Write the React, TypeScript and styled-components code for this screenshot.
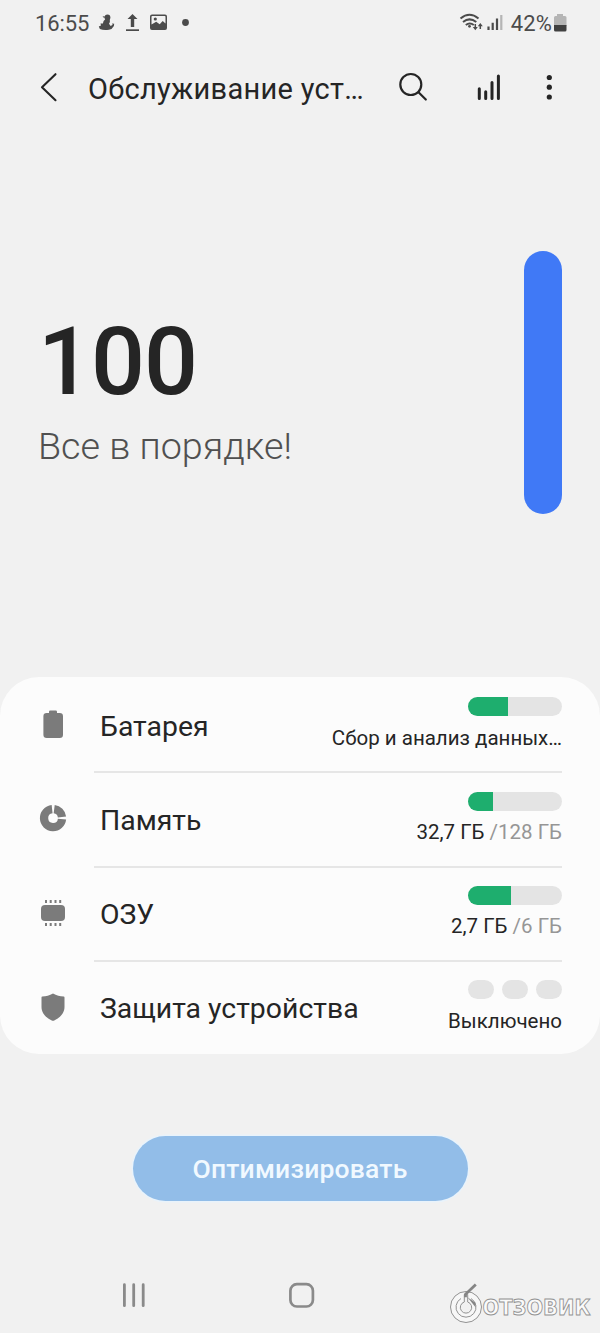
import React from "react";
import styled, { createGlobalStyle } from "styled-components";

const Global = createGlobalStyle`
  * { box-sizing: border-box; }
  body { margin: 0; background: #f1f1f1; font-family: Roboto, sans-serif; color: #252525; }
`;

const Screen = styled.main`
  width: 600px;
  height: 1333px;
  background: #f1f1f1;
  display: flex;
  flex-direction: column;
  overflow: hidden;
  svg { display: block; flex: none; }
`;

const StatusBar = styled.header`
  height: 46px;
  padding: 0 33px 0 35px;
  display: flex;
  justify-content: space-between;
  align-items: center;
  color: #4b4b4b;
`;

const StatusGroup = styled.div`
  display: flex;
  align-items: center;
`;

const StatusText = styled.span<{ $spacing: number }>`
  padding-top: 2px;
  font-size: 22px;
  line-height: 26px;
  letter-spacing: ${(p) => p.$spacing}px;
`;

const AppBar = styled.nav`
  height: 84px;
  padding: 0 38px 0 36px;
  display: flex;
  align-items: center;
`;

const Title = styled.h1`
  margin: 1px 0 0 22px;
  width: 304px;
  font-size: 29px;
  line-height: 36px;
  font-weight: 400;
  letter-spacing: 0.28px;
  white-space: nowrap;
`;

const IconButton = styled.button<{ $width: number }>`
  width: ${(p) => p.$width}px;
  height: 36px;
  padding: 0;
  border: 0;
  background: none;
  color: #252525;
  display: flex;
  align-items: center;
`;

const Summary = styled.section`
  height: 547px;
  padding: 121px 38px 0;
  display: flex;
  justify-content: space-between;
`;

const Score = styled.div`
  padding-top: 54px;
`;

const ScoreValue = styled.div`
  font-size: 95px;
  line-height: 114px;
  font-weight: 500;
  letter-spacing: -1px;
`;

const ScoreText = styled.div`
  margin-top: 4px;
  font-size: 37.7px;
  line-height: 46px;
  font-weight: 300;
  color: #505050;
`;

const ScoreBar = styled.div`
  width: 38px;
  height: 263px;
  border-radius: 19px;
  background: #4079f6;
`;

const Card = styled.section`
  height: 377px;
  border-radius: 39px;
  background: #fcfcfc;
  padding: 0 38px;
  display: flex;
  flex-direction: column;
`;

const Row = styled.div`
  flex: 1;
  display: flex;
`;

const RowIcon = styled.div`
  width: 56px;
  padding-top: 31px;
`;

const RowBody = styled.div<{ $last?: boolean }>`
  flex: 1;
  margin-bottom: ${(p) => (p.$last ? "0" : "-2px")};
  padding: 0 0 0 6px;
  display: flex;
  justify-content: space-between;
  border-bottom: ${(p) => (p.$last ? "0" : "2px solid #e6e6e6")};
`;

const Label = styled.div`
  padding-top: 31.5px;
  font-size: 28.4px;
  line-height: 36px;
  white-space: nowrap;
`;

const Status = styled.div`
  padding-top: 20.3px;
  display: flex;
  flex-direction: column;
  align-items: flex-end;
`;

const Meter = styled.div`
  width: 94px;
  height: 19px;
  border-radius: 10px;
  background: #e4e4e4;
  overflow: hidden;
`;

const MeterFill = styled.div<{ $width: number }>`
  width: ${(p) => p.$width}px;
  height: 100%;
  background: #1eae6e;
`;

const Pills = styled.div`
  width: 94px;
  display: flex;
  justify-content: space-between;
`;

const Pill = styled.div`
  width: 26px;
  height: 19px;
  border-radius: 10px;
  background: #e4e4e4;
`;

const Detail = styled.div`
  margin-top: 8.7px;
  font-size: 20.5px;
  line-height: 26px;
  white-space: nowrap;
`;

const Muted = styled.span`
  color: #969696;
`;

const Actions = styled.div`
  padding-top: 82px;
  height: 204px;
  display: flex;
  justify-content: center;
  align-items: flex-start;
`;

const Primary = styled.button`
  width: 335px;
  height: 65px;
  border: 0;
  border-radius: 33px;
  background: #92bde8;
  color: #f1f9ff;
  font: 500 26.5px/32px Roboto, sans-serif;
  letter-spacing: 0.2px;
  padding: 0;
  box-shadow: 0 0 0 1.5px #e9f3fb;
`;

const NavBar = styled.footer`
  position: relative;
  height: 75px;
  padding: 24px 0 0 122px;
  display: flex;
  gap: 143px;
`;

const Watermark = styled.div`
  position: absolute;
  left: 445px;
  top: 20px;
`;

const BatteryIcon = () => (
  <svg width="30" height="32" viewBox="0 0 30 32" fill="#7b7b7b">
    <path d="M11 5V3.8q0-1.300 1.300-1.300h5.400q1.300 0 1.300 1.300V5h2.700q3.300 0 3.300 3.300v18.400q0 3.300-3.300 3.300H8.700q-3.300 0-3.300-3.300V8.300Q5.400 5 8.700 5z" />
  </svg>
);

const StorageIcon = () => (
  <svg width="30" height="32" viewBox="0 0 30 32" fill="none" stroke="#7b7b7b" strokeWidth="8.300">
    <path d="M14.100 7.200A9 9 0 1 0 24 17.100" />
    <path d="M16.200 7.200A9 9 0 0 1 24 15" />
  </svg>
);

const MemoryIcon = () => (
  <svg width="30" height="32" viewBox="0 0 30 32" fill="#7b7b7b">
    <rect x="3" y="8" width="24" height="16" rx="4" />
    <path d="M8 3v3M12.700 3v3M17.500 3v3M22.200 3v3M8 26v3M12.700 26v3M17.500 26v3M22.200 26v3" stroke="#7b7b7b" strokeWidth="2" strokeLinecap="butt" />
  </svg>
);

const ShieldIcon = () => (
  <svg width="30" height="32" viewBox="0 0 30 32" fill="#7b7b7b">
    <path d="M15 2.500C18.500 4.600 22 5.200 25.700 5.500q.8.100.8.900V16c0 6.500-4.800 11-10.300 13.500q-1.200.6-2.400 0C8.300 27 3.500 22.500 3.500 16V6.400q0-.8.800-.9C8 5.200 11.500 4.600 15 2.500z" />
  </svg>
);

const rows = [
  { label: "Батарея", icon: <BatteryIcon />, fill: 40, value: "Сбор и анализ данных…" },
  { label: "Память", icon: <StorageIcon />, fill: 25, value: "32,7 ГБ ", total: "/128 ГБ" },
  { label: "ОЗУ", icon: <MemoryIcon />, fill: 43, value: "2,7 ГБ ", total: "/6 ГБ" },
  { label: "Защита устройства", icon: <ShieldIcon />, value: "Выключено" },
];

export default function App() {
  return (
    <Screen>
      <Global />
      <StatusBar>
        <StatusGroup>
          <StatusText $spacing={-0.1}>16:55</StatusText>
          <svg width="106" height="24" viewBox="89 11 106 24" fill="#4b4b4b">
            <circle cx="107.500" cy="17.500" r="2.900" />
            <path d="M104.500 16l-2 .8 2.300 1.500zM105.500 19l4.300.2q.6 2.800-.8 4.600l1.700 2.200 2-1.300-.8-1.300 2.300.4-.3 2.300q-1.500 3.200-5 3.700-5.500.8-9-.7l-1.100-2.600 2.200-.9-.5-2 2.400-.2q0-2.500 2.600-4.400z" />
            <path d="M132.500 14l5 5h-3.300v8h-3.400v-8h-3.300z" />
            <path d="M126 29.300h13v1.700h-13z" />
            <path fillRule="evenodd" d="M152 14.500h13q2 0 2 2v11.500q0 2-2 2h-13q-2 0-2-2V16.500q0-2 2-2zm.2 1.600q-.7 0-.7.700v7.700l4.700-2.700 3.500 2.500 3-3.300 2.800 2.500V16.800q0-.7-.7-.7z" />
            <circle cx="155.300" cy="19" r="1.600" />
            <circle cx="185.500" cy="22.500" r="3.400" />
          </svg>
        </StatusGroup>
        <StatusGroup>
          <svg width="52" height="24" viewBox="459 11 52 24" fill="none" stroke="#4b4b4b">
            <path d="M460.500 18.500q9-7.500 18 0M463 22q6.500-5.300 13.300 0M465.800 25q4-3 8 0" strokeWidth="2" />
            <circle cx="469.500" cy="26.300" r="1.400" fill="#4b4b4b" stroke="none" />
            <path d="M475.300 24v4M480.300 29v-4" strokeWidth="1.500" />
            <path d="M472.800 27h5l-2.500 3.200zM477.800 26.200h5l-2.500-3.200z" fill="#4b4b4b" stroke="none" />
            <path d="M488.500 26.500V30M492.700 22.700V30M497 18.500V30" strokeWidth="2.200" />
            <path d="M501.300 15V30" strokeWidth="2.200" stroke="#b5b5b5" />
          </svg>
          <StatusText $spacing={0.1}>42%</StatusText>
          <svg width="15" height="20" viewBox="552 12 15 20">
            <path d="M557 13h6v2h2q1.500 0 1.500 1.500V25H554v-8.500q0-1.500 1.500-1.500h1.500z" fill="#b5b5b5" />
            <path d="M554 24h12.500v5q0 1.500-1.500 1.500h-9.500q-1.500 0-1.500-1.500z" fill="#404040" />
          </svg>
        </StatusGroup>
      </StatusBar>

      <AppBar>
        <IconButton $width={30} aria-label="Назад">
          <svg width="30" height="32" viewBox="36 72 30 32" fill="none" stroke="#252525" strokeWidth="2.100" strokeLinecap="round" strokeLinejoin="round">
            <path d="M55.500 74.200L42 87.200l13.500 13" />
          </svg>
        </IconButton>
        <Title>Обслуживание уст…</Title>
        <IconButton $width={78} aria-label="Поиск">
          <svg width="36" height="32" viewBox="392 72 36 32" fill="none" stroke="#252525" strokeWidth="2.200" strokeLinecap="round">
            <circle cx="410.800" cy="84.500" r="10.500" />
            <path d="M418.500 92.300l7.300 7.200" />
          </svg>
        </IconButton>
        <IconButton $width={68} aria-label="Статистика">
          <svg width="36" height="32" viewBox="470 72 36 32" fill="none" stroke="#252525" strokeWidth="3" strokeLinecap="round">
            <path d="M479.300 88.700v9.700M485.700 91.800v6.600M492 82.500v15.900M498.400 76v22.400" />
          </svg>
        </IconButton>
        <IconButton $width={24} aria-label="Ещё">
          <svg width="24" height="32" viewBox="538 72 24 32" fill="#252525">
            <circle cx="549.300" cy="77.500" r="2.600" />
            <circle cx="549.300" cy="87.200" r="2.600" />
            <circle cx="549.300" cy="97" r="2.600" />
          </svg>
        </IconButton>
      </AppBar>

      <Summary>
        <Score>
          <ScoreValue>100</ScoreValue>
          <ScoreText>Все в порядке!</ScoreText>
        </Score>
        <ScoreBar />
      </Summary>

      <Card>
        {rows.map((r, i) => (
          <Row key={r.label}>
            <RowIcon>{r.icon}</RowIcon>
            <RowBody $last={i === rows.length - 1}>
              <Label>{r.label}</Label>
              <Status>
                {r.fill ? (
                  <Meter><MeterFill $width={r.fill} /></Meter>
                ) : (
                  <Pills><Pill /><Pill /><Pill /></Pills>
                )}
                <Detail>{r.value}{r.total && <Muted>{r.total}</Muted>}</Detail>
              </Status>
            </RowBody>
          </Row>
        ))}
      </Card>

      <Actions>
        <Primary>Оптимизировать</Primary>
      </Actions>

      <NavBar>
        <svg width="24" height="26" viewBox="122 1282 24 26" stroke="#8a8a8a" strokeWidth="2.800" strokeLinecap="round">
          <path d="M124.400 1284.700v21M133.700 1284.700v21M143.200 1284.700v21" />
        </svg>
        <svg width="26" height="26" viewBox="289 1282 26 26" fill="none" stroke="#8a8a8a" strokeWidth="2.700">
          <rect x="290.400" y="1284.200" width="22.500" height="22.300" rx="6.500" />
        </svg>
        <Watermark>
          <svg width="155" height="50" viewBox="445 1278 155 50" fill="none">
            <circle cx="466" cy="1307" r="15.500" fill="#f7f7f7" stroke="#929292" />
            <path d="M461 1298.500a10 10 0 1 0 10 0" stroke="#929292" />
            <path d="M464.300 1294.500v7.500a5.700 5.700 0 1 0 3.400 0v-7.500z" fill="#f1f1f1" stroke="#929292" />
            <path d="M475.800 1284.500L465.500 1294.300v3" stroke="#858585" strokeWidth="2.800" />
            <path d="M467.500 1297.200l8 5.500v4.500z" fill="#858585" />
            <text x="482.500" y="1314.700" textLength="108" lengthAdjust="spacingAndGlyphs" fontFamily="DejaVu Sans, sans-serif" fontWeight="700" fontSize="21" fill="#fafafa" stroke="#929292" strokeWidth="0.900">ОТЗОВИК</text>
          </svg>
        </Watermark>
      </NavBar>
    </Screen>
  );
}
